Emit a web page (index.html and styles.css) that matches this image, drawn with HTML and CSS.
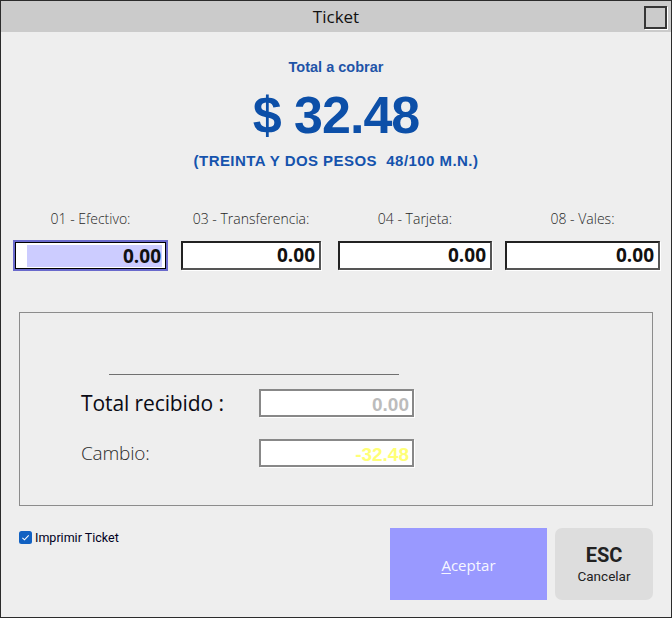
FILE: index.html
```html
<!DOCTYPE html>
<html lang="es">
<head>
  <meta charset="UTF-8">
  <title>Ticket</title>
  <link rel="stylesheet" href="styles.css">
</head>
<body>
  <div class="window">
    <!-- Title bar -->
    <div class="titlebar">
      <span></span>
      <span class="title">Ticket</span>
      <span class="close-box"></span>
    </div>

    <!-- Total -->
    <div class="summary">
      <div class="summary-label">Total a cobrar</div>
      <div class="summary-amount">$ 32.48</div>
      <div class="summary-words">(TREINTA Y DOS PESOS  48/100 M.N.)</div>
    </div>

    <!-- Payment fields -->
    <div class="fields">
      <div class="field field-efectivo">
        <div class="field-label">01 - Efectivo:</div>
        <div class="field-input focused"><span class="selected">0.00</span></div>
      </div>
      <div class="field field-transfer">
        <div class="field-label">03 - Transferencia:</div>
        <div class="field-input">0.00</div>
      </div>
      <div class="field field-tarjeta">
        <div class="field-label">04 - Tarjeta:</div>
        <div class="field-input">0.00</div>
      </div>
      <div class="field field-vales">
        <div class="field-label">08 - Vales:</div>
        <div class="field-input">0.00</div>
      </div>
    </div>

    <!-- Received / change -->
    <div class="group">
      <div class="group-line"></div>
      <div class="group-rows">
        <div class="row-label strong">Total recibido :</div>
        <div class="row-input received">0.00</div>
        <div class="row-label">Cambio:</div>
        <div class="row-input change">-32.48</div>
      </div>
    </div>

    <!-- Footer -->
    <div class="footer">
      <label class="print-check">
        <svg width="13" height="13" viewBox="0 0 13 13">
          <rect x="0" y="0" width="13" height="13" rx="2.5" fill="#1161c2"/>
          <path d="M3.4 6.8 L5.5 8.8 L9.7 4.4" fill="none" stroke="#ffffff" stroke-width="1.1"/>
        </svg>
        <span>Imprimir Ticket</span>
      </label>
      <div class="btn-accept"><u>A</u>ceptar</div>
      <div class="btn-cancel">
        <span class="btn-key">ESC</span>
        <span class="btn-sub">Cancelar</span>
      </div>
    </div>
  </div>
</body>
</html>
```

FILE: styles.css
```css
body {
  margin: 0;
  background: #eeeeee;
}

.window {
  width: 672px;
  height: 618px;
  box-sizing: border-box;
  border: 1px solid #2b2b2b;
  background: #eeeeee;
  font-family: 'Open Sans', sans-serif;
}

.titlebar {
  height: 31px;
  background: #cbcbcb;
  display: grid;
  grid-template-columns: 1fr auto 1fr;
  align-items: center;
}

.title {
  font-size: 17px;
  color: #111111;
  line-height: 31px;
  padding-bottom: 1px;
}

.close-box {
  justify-self: end;
  width: 23px;
  height: 23px;
  box-sizing: border-box;
  margin-right: 4px;
  margin-top: 1px;
  border: 2px solid #363636;
  background: #cbcbcb;
  box-shadow: 1px 1px 0 #ffffff;
}

.summary {
  text-align: center;
  font-family: 'Liberation Sans', Arial, sans-serif;
  font-weight: bold;
  color: #0c4fa8;
  margin-top: 27px;
}

.summary-label {
  font-size: 14.5px;
  line-height: 16px;
  color: #1e54a8;
}

.summary-amount {
  font-size: 52px;
  line-height: 60px;
  letter-spacing: -1px;
  margin-top: 10px;
}

.summary-words {
  font-size: 15px;
  line-height: 18px;
  letter-spacing: 0.45px;
  white-space: pre;
  margin-top: 7px;
  color: #1553ad;
}

.fields {
  display: flex;
  align-items: flex-start;
  padding-left: 12px;
  margin-top: 40px;
}

.field {
  display: flex;
  flex-direction: column;
  align-items: center;
}

.field-efectivo { width: 155px; }
.field-transfer { width: 140px; margin-left: 13px; }
.field-tarjeta { width: 154px; margin-left: 17px; }
.field-vales { width: 155px; margin-left: 13px; }

.field-label {
  font-size: 14px;
  line-height: 18px;
  font-weight: 300;
  color: #262626;
  white-space: nowrap;
}

.field-input {
  width: 100%;
  height: 29px;
  box-sizing: border-box;
  margin-top: 13px;
  border: 2px solid #222222;
  border-right-color: #555555;
  border-bottom-color: #555555;
  box-shadow: 1px 1px 0 #ffffff;
  background: #ffffff;
  text-align: right;
  padding-right: 4px;
  font-size: 19px;
  font-weight: bold;
  line-height: 25px;
  color: #111111;
}

.field-input.focused {
  height: 31px;
  margin-top: 12px;
  border: 2px solid #6a6acc;
  box-shadow: inset 0 0 0 1px #000000;
  padding: 3px 4px 0 12px;
}

.selected {
  display: block;
  height: 22px;
  line-height: 22px;
  background: #ccccff;
  padding-right: 1px;
}

.group {
  height: 194px;
  box-sizing: border-box;
  margin: 41px 18px 0;
  border: 1px solid #8c8c8c;
  padding-top: 61px;
}

.group-line {
  width: 290px;
  height: 1px;
  margin-left: 89px;
  background: #707070;
}

.group-rows {
  display: grid;
  grid-template-columns: 178px 155px;
  grid-auto-rows: 28px;
  row-gap: 22px;
  align-items: center;
  padding-left: 61px;
  margin-top: 14px;
}

.row-label {
  font-size: 19px;
  font-weight: 300;
  color: #2a2a2a;
  letter-spacing: -0.2px;
  white-space: nowrap;
}

.row-label.strong {
  font-weight: 400;
  font-size: 21px;
  letter-spacing: -0.1px;
  color: #0a0a14;
}

.row-input {
  height: 28px;
  box-sizing: border-box;
  border: 2px solid #888888;
  box-shadow: 1px 1px 0 #ffffff;
  background: #ffffff;
  text-align: right;
  padding-right: 3px;
  font-family: 'Liberation Sans', Arial, sans-serif;
  font-size: 19px;
  font-weight: bold;
  line-height: 28px;
}

.received { color: #bcbcbc; }
.change { color: #ffff77; }

.footer {
  display: flex;
  align-items: flex-start;
  margin: 22px 18px 0;
}

.print-check {
  display: flex;
  align-items: center;
  gap: 3px;
  margin-top: 2px;
  font-family: Roboto, sans-serif;
  font-size: 12.5px;
  line-height: 15px;
  color: #000022;
}

.print-check svg {
  display: block;
}

.btn-accept {
  margin-left: auto;
  width: 157px;
  height: 72px;
  background: #9999ff;
  color: #f6f6ff;
  font-size: 15px;
  display: flex;
  align-items: center;
  justify-content: center;
  padding-top: 1px;
  box-sizing: border-box;
}

.btn-accept u {
  text-decoration-thickness: 1px;
  text-underline-offset: 2px;
}

.btn-cancel {
  margin-left: 8px;
  width: 98px;
  height: 72px;
  background: #dddddd;
  border-radius: 7px;
  display: flex;
  flex-direction: column;
  align-items: center;
  justify-content: center;
  gap: 2px;
  font-family: Roboto, sans-serif;
  color: #222222;
}

.btn-key {
  font-size: 20px;
  font-weight: bold;
  line-height: 22px;
}

.btn-sub {
  font-size: 13.5px;
  line-height: 17px;
}
```
